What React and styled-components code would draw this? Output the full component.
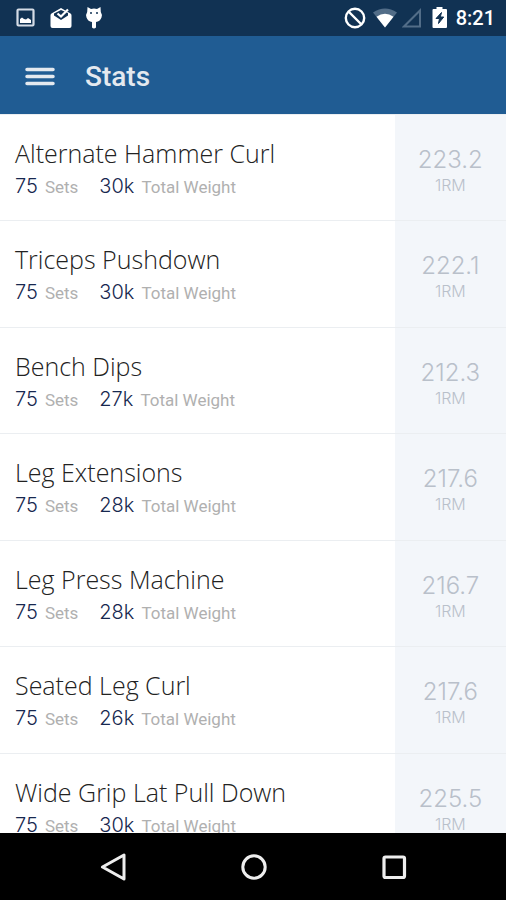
import React from "react";
import styled, { createGlobalStyle } from "styled-components";

const GlobalStyle = createGlobalStyle`
  * { box-sizing: border-box; }
  body { margin: 0; background: #fff; }
  button { border: 0; padding: 0; background: none; cursor: pointer; }
`;

const Screen = styled.div`
  display: flex;
  flex-direction: column;
  height: 100vh;
  overflow: hidden;
  font-family: Roboto, sans-serif;
`;

const StatusBar = styled.div`
  display: flex;
  flex: none;
  align-items: center;
  justify-content: space-between;
  height: 36px;
  padding: 0 11px 0 15px;
  background: #113253;
  color: #fff;
`;

const StatusGroup = styled.div`
  display: flex;
  align-items: center;
  gap: ${(p) => p.$gap}px;
`;

const Icon = styled.svg`
  display: block;
  flex: none;
  width: ${(p) => p.$w}px;
  height: ${(p) => p.$h}px;
`;

const Clock = styled.time`
  font-size: 20px;
  font-weight: 500;
  line-height: 24px;
`;

const AppBar = styled.header`
  display: flex;
  flex: none;
  align-items: center;
  gap: 27px;
  height: 78px;
  padding: 3px 22px 0;
  background: #205c93;
`;

const IconButton = styled.button`
  display: grid;
  place-items: center;
  width: ${(p) => p.$size}px;
  height: ${(p) => p.$size}px;
`;

const Title = styled.h1`
  margin: 0;
  color: #e4e9ef;
  font-size: 28px;
  font-weight: 500;
  line-height: 36px;
`;

const Scroller = styled.main`
  flex: 1;
  min-height: 0;
  overflow-y: auto;
  scrollbar-width: none;
`;

const ExerciseList = styled.ul`
  display: grid;
  grid-auto-rows: 1fr;
  min-height: 746px;
  margin: 0;
  padding: 0;
  border-top: 1px solid #ebeef1;
  list-style: none;
`;

const Exercise = styled.li`
  display: grid;
  grid-template-columns: 1fr 22%;
  border-bottom: 1px solid #ebeef1;
`;

const Details = styled.div`
  min-width: 0;
  padding: 20px 15px 0;
`;

const Name = styled.h2`
  margin: 0;
  color: #222;
  font: 300 25px/36px "Open Sans", sans-serif;
  white-space: nowrap;
`;

const Figures = styled.div`
  display: flex;
  align-items: baseline;
  gap: 21px;
  line-height: 30px;
`;

const Figure = styled.span`
  display: flex;
  align-items: baseline;
  gap: 7px;
  color: #b0b0b0;
  font-size: 17px;
`;

const Amount = styled.span`
  color: #17284f;
  font-family: Inter, sans-serif;
  font-size: 20px;
  font-weight: 300;
`;

const RepMax = styled.div`
  display: flex;
  flex-direction: column;
  align-items: center;
  padding-top: 30px;
  background: #f3f6fa;
  color: #b9c0ca;
  font-family: Inter, sans-serif;
  font-weight: 300;
`;

const RepMaxValue = styled.span`
  font-size: 24px;
  line-height: 30px;
`;

const RepMaxLabel = styled.span`
  font-size: 16px;
  line-height: 20px;
`;

const NavBar = styled.nav`
  display: flex;
  flex: none;
  align-items: center;
  justify-content: center;
  gap: 92px;
  height: 67px;
  padding-left: 2px;
  background: #000;
`;

const exercises = [
  ["Alternate Hammer Curl", "30k", "223.2"],
  ["Triceps Pushdown", "30k", "222.1"],
  ["Bench Dips", "27k", "212.3"],
  ["Leg Extensions", "28k", "217.6"],
  ["Leg Press Machine", "28k", "216.7"],
  ["Seated Leg Curl", "26k", "217.6"],
  ["Wide Grip Lat Pull Down", "30k", "225.5"],
];

function ExerciseRow({ name, weight, max }) {
  return (
    <Exercise>
      <Details>
        <Name>{name}</Name>
        <Figures>
          <Figure><Amount>75</Amount>Sets</Figure>
          <Figure><Amount>{weight}</Amount>Total Weight</Figure>
        </Figures>
      </Details>
      <RepMax>
        <RepMaxValue>{max}</RepMaxValue>
        <RepMaxLabel>1RM</RepMaxLabel>
      </RepMax>
    </Exercise>
  );
}

export default function App() {
  return (
    <Screen>
      <GlobalStyle />
      <StatusBar>
        <StatusGroup $gap={13}>
          <Icon $w={22} $h={20} viewBox="0 0 22 20" aria-hidden="true">
            <rect x="2.500" y="1.500" width="16" height="16" rx="1" fill="none" stroke="#d5dce6" strokeWidth="2.200" />
            <path d="M5 15V11l2-1.500 2 1.500 2 .5 2-1.500 3 2V15z" fill="#fff" />
          </Icon>
          <Icon $w={22} $h={22} viewBox="0 0 22 22" aria-hidden="true">
            <path d="M11 1 1.500 6.500Q.5 7.200 .5 8.500V19q0 2 2 2h17q2 0 2-2V8.500q0-1.300-1-2L17 4.500z" fill="#fff" />
            <path d="M4 6.500 11 3l7 3v2.500L11 13 4 8.500z" fill="#113253" />
            <path d="m7.500 6.500 3.500 3 7-7" fill="none" stroke="#fff" strokeWidth="2.200" />
          </Icon>
          <Icon $w={18} $h={24} viewBox="0 0 18 24" aria-hidden="true">
            <path d="M2.500 1 6 3q3-1 6 0l3.500-2 .3 5q1.700 2.500.7 5.500-1.500 4-5.500 4.500v5.500q-2 2-4 0V16Q3 15.500 1.500 11.500q-1-3 .7-5.500z" fill="#fff" />
            <circle cx="6" cy="7" r="1" fill="#113253" />
            <circle cx="12" cy="7" r="1" fill="#113253" />
          </Icon>
        </StatusGroup>
        <StatusGroup $gap={5}>
          <Icon $w={22} $h={22} viewBox="0 0 22 22" aria-hidden="true">
            <circle cx="11" cy="11" r="9.200" fill="none" stroke="#fff" strokeWidth="2.400" />
            <path d="m4.500 4.500 13 13" stroke="#fff" strokeWidth="2.400" />
          </Icon>
          <Icon $w={26} $h={20} viewBox="0 0 26 20" aria-hidden="true">
            <path d="M2 4.500Q14-3.500 26 4.500L14 19.500z" fill="#526d88" />
            <path d="M5.500 8.800Q14 2.500 22.500 8.800L14 19.500z" fill="#fff" />
          </Icon>
          <Icon $w={20} $h={20} viewBox="0 0 20 20" aria-hidden="true">
            <path d="M2 18.500H18V2.500z" fill="none" stroke="#526d88" strokeWidth="2" />
          </Icon>
          <Icon $w={24} $h={22} viewBox="0 0 24 22" aria-hidden="true">
            <path d="M9.500 0h6v2H19q1 0 1 1v17q0 1-1 1H6.500q-1 0-1-1V3q0-1 1-1h3z" fill="#fff" />
            <path d="M14.500 5.500 9 11.500h3.500l-1 5 5.200-6.500h-3.400z" fill="#113253" stroke="#113253" />
          </Icon>
          <Clock>8:21</Clock>
        </StatusGroup>
      </StatusBar>
      <AppBar>
        <IconButton $size={36} type="button" aria-label="Open menu">
          <Icon $w={30} $h={20} viewBox="0 0 30 20" aria-hidden="true">
            <path d="M2 2.500h26M2 9.500h26M2 16.500h26" stroke="#e4e9ef" strokeWidth="3.500" strokeLinecap="round" />
          </Icon>
        </IconButton>
        <Title>Stats</Title>
      </AppBar>
      <Scroller>
        <ExerciseList>
          {exercises.map(([name, weight, max]) => (
            <ExerciseRow key={name} name={name} weight={weight} max={max} />
          ))}
        </ExerciseList>
      </Scroller>
      <NavBar aria-label="System navigation">
        <IconButton $size={48} type="button" aria-label="Back">
          <Icon $w={28} $h={28} viewBox="0 0 28 28" aria-hidden="true">
            <path d="M24 2v24L2.500 14z" fill="none" stroke="#eee" strokeWidth="3" strokeLinejoin="round" />
          </Icon>
        </IconButton>
        <IconButton $size={48} type="button" aria-label="Home">
          <Icon $w={28} $h={28} viewBox="0 0 28 28" aria-hidden="true">
            <circle cx="14" cy="14" r="11.200" fill="none" stroke="#eee" strokeWidth="3" />
          </Icon>
        </IconButton>
        <IconButton $size={48} type="button" aria-label="Recent apps">
          <Icon $w={28} $h={28} viewBox="0 0 28 28" aria-hidden="true">
            <rect x="4" y="4" width="20.500" height="20.500" rx="1.500" fill="none" stroke="#eee" strokeWidth="3.200" />
          </Icon>
        </IconButton>
      </NavBar>
    </Screen>
  );
}
